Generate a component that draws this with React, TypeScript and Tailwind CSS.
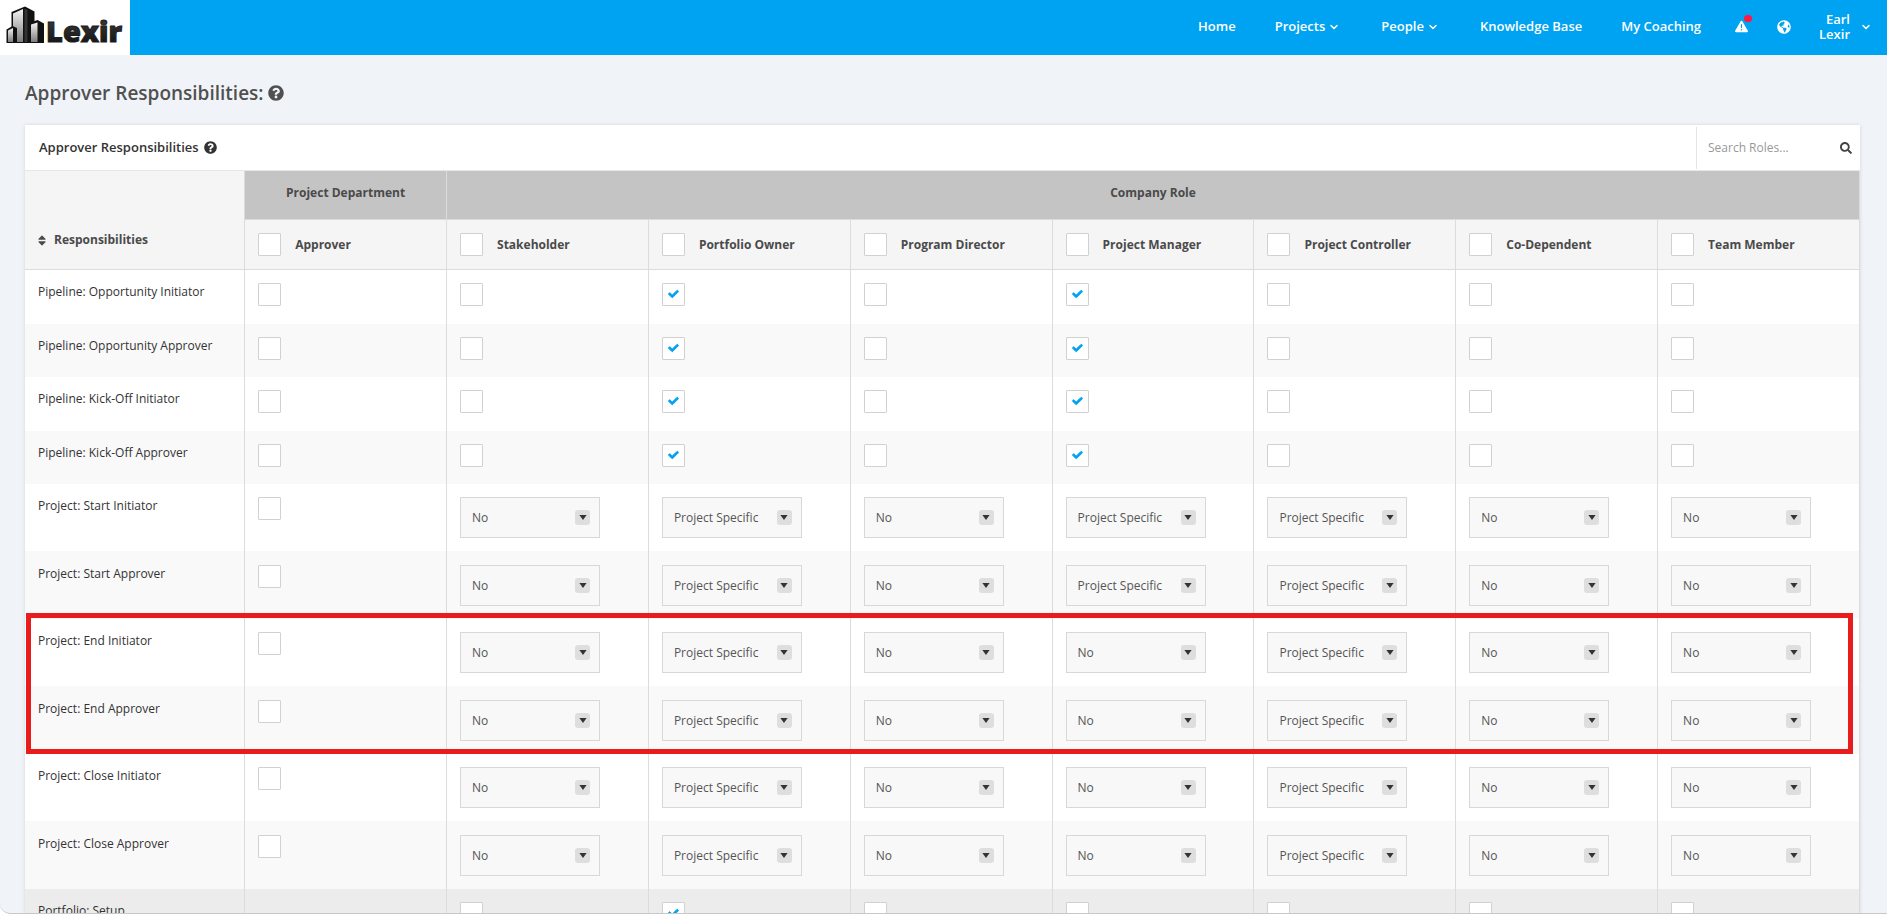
import React, { useState } from 'react';
import { FaCheck, FaGlobeAmericas, FaQuestionCircle, FaSearch, FaSort } from 'react-icons/fa';
import { FaTriangleExclamation } from 'react-icons/fa6';
import { FiChevronDown } from 'react-icons/fi';

const ROLES = [
  'Stakeholder',
  'Portfolio Owner',
  'Program Director',
  'Project Manager',
  'Project Controller',
  'Co-Dependent',
  'Team Member',
];

type Row =
  | { name: string; kind: 'check'; checked: number[] }
  | { name: string; kind: 'select'; specific: number[] };

const ROWS: Row[] = [
  { name: 'Pipeline: Opportunity Initiator', kind: 'check', checked: [1, 3] },
  { name: 'Pipeline: Opportunity Approver', kind: 'check', checked: [1, 3] },
  { name: 'Pipeline: Kick-Off Initiator', kind: 'check', checked: [1, 3] },
  { name: 'Pipeline: Kick-Off Approver', kind: 'check', checked: [1, 3] },
  { name: 'Project: Start Initiator', kind: 'select', specific: [1, 3, 4] },
  { name: 'Project: Start Approver', kind: 'select', specific: [1, 3, 4] },
  { name: 'Project: End Initiator', kind: 'select', specific: [1, 4] },
  { name: 'Project: End Approver', kind: 'select', specific: [1, 4] },
  { name: 'Project: Close Initiator', kind: 'select', specific: [1, 4] },
  { name: 'Project: Close Approver', kind: 'select', specific: [1, 4] },
  { name: 'Portfolio: Setup', kind: 'check', checked: [1] },
];

const Checkbox = ({ label, initial = false }: { label: string; initial?: boolean }) => {
  const [checked, setChecked] = useState(initial);

  return (
    <label className="relative block h-[23px] w-[23px] shrink-0 cursor-pointer">
      <input
        type="checkbox"
        aria-label={label}
        checked={checked}
        onChange={() => setChecked(!checked)}
        className="block h-[23px] w-[23px] appearance-none rounded-[1px] border border-[#d1d1d1] bg-white"
      />
      {checked && (
        <FaCheck className="pointer-events-none absolute inset-x-0 top-[6px] mx-auto h-[10px] w-[11px] stroke-[#00a2f2] stroke-[50] text-[#00a2f2]" />
      )}
    </label>
  );
};

const RoleSelect = ({ label, initial }: { label: string; initial: string }) => (
  <div className="relative w-[140px]">
    <select
      aria-label={label}
      defaultValue={initial}
      className="block h-[41px] w-full appearance-none border border-[#d8d8d8] bg-[#f8f8f8] pl-[11px] pr-8 text-[12px] text-[#555]"
    >
      <option>No</option>
      <option>Project Specific</option>
    </select>
    <span className="pointer-events-none absolute top-[13px] right-[10px] flex h-[15px] w-[15px] items-center justify-center rounded-[3px] bg-[#dedede]">
      <svg viewBox="0 0 8 5" className="h-[5px] w-2" fill="#333">
        <path d="M0.4 0h7.2L4 5z" />
      </svg>
    </span>
  </div>
);

const Logo = () => (
  <a href="#" aria-label="Lexir" className="block h-[55px] w-[130px] bg-white">
    <svg viewBox="0 0 130 55" className="h-full w-full">
      <defs>
        <linearGradient id="face" x1="0" y1="0" x2="0" y2="1">
          <stop offset="0" stopColor="#f4f4f4" />
          <stop offset="1" stopColor="#7c7c7c" />
        </linearGradient>
        <linearGradient id="word" x1="0" y1="0" x2="0" y2="1">
          <stop offset="0" stopColor="#444" />
          <stop offset="1" stopColor="#0c0c0c" />
        </linearGradient>
      </defs>
      <path d="M11.500 12L25 6.500L34.500 11.500V43H11.500z" fill="#111" />
      <path d="M13 13.500L23 9V42H13z" fill="url(#face)" />
      <path d="M24.500 8.500L27.500 10V42H24.500z" fill="#333" />
      <path d="M6.500 29.500L12.500 26L17 28V43H6.500z" fill="#111" />
      <path d="M8 30.500L13 28V42H8z" fill="url(#face)" />
      <path d="M29 23L37.500 20L44 23.500V43H29z" fill="#111" />
      <path d="M31 24.500L37.500 22.500V42H31z" fill="url(#face)" />
      <text
        x="46"
        y="42"
        fontFamily="'Open Sans', sans-serif"
        fontSize="29"
        fontWeight="800"
        fill="url(#word)"
        stroke="#1c1c1c"
        strokeWidth="1"
      >
        Lexir
      </text>
    </svg>
  </a>
);

const Header = () => (
  <header className="flex h-[55px] items-center justify-between bg-[#00a2f2] text-[13px] font-semibold text-white">
    <Logo />
    <nav className="flex items-center pr-[15px] pb-[2px]">
      <a href="#" className="mr-[39px]">Home</a>
      <button type="button" className="mr-[41px] flex items-center gap-[3px]">
        Projects <FiChevronDown className="h-3 w-3 stroke-[3]" />
      </button>
      <button type="button" className="mr-[41px] flex items-center gap-[3px]">
        People <FiChevronDown className="h-3 w-3 stroke-[3]" />
      </button>
      <a href="#" className="mr-[39px]">Knowledge Base</a>
      <a href="#" className="mr-[34px]">My Coaching</a>
      <button type="button" aria-label="Alerts" className="relative mr-[29px]">
        <FaTriangleExclamation className="h-[13px] w-[13px]" />
        <span className="absolute -top-[5px] -right-1 h-[7px] w-2 rounded-full bg-[#ff1744]" />
      </button>
      <button type="button" aria-label="Language" className="mr-[28px]">
        <FaGlobeAmericas className="h-[14px] w-[14px]" />
      </button>
      <button type="button" className="flex items-center gap-[10px] text-right leading-[15px]">
        <span>Earl<br />Lexir</span>
        <FiChevronDown className="h-3 w-3 stroke-[3]" />
      </button>
    </nav>
  </header>
);

const rowStyle = (row: Row, index: number) => {
  if (row.name === 'Portfolio: Setup') return 'h-[54px] bg-[#ececec]';
  if (row.kind === 'check') return index % 2 ? 'h-[53px] bg-[#f9f9f9]' : 'h-[54px] bg-white';
  return index % 2 ? 'h-[68px] bg-[#f9f9f9]' : 'h-[67px] bg-white';
};

const ResponsibilityRow = ({ row, index }: { row: Row; index: number }) => {
  const pad = row.kind === 'select' && index % 2 ? 'pt-[14px]' : 'pt-[13px]';

  return (
    <tr className={`align-top ${rowStyle(row, index)}`}>
      <th scope="row" className={`border-r border-[#dcdcdc] pl-[13px] text-left leading-[18px] font-normal text-[#333] ${pad}`}>
        {row.name}
      </th>
      <td className={`border-r border-[#dcdcdc] pl-[13px] ${pad}`}>
        {row.name !== 'Portfolio: Setup' && <Checkbox label={`${row.name}, Approver`} />}
      </td>
      {ROLES.map((role, i) => (
        <td key={role} className={`border-r border-[#dcdcdc] pl-[13px] ${pad}`}>
          {row.kind === 'check' ? (
            <Checkbox label={`${row.name}, ${role}`} initial={row.checked.includes(i)} />
          ) : (
            <RoleSelect
              label={`${row.name}, ${role}`}
              initial={row.specific.includes(i) ? 'Project Specific' : 'No'}
            />
          )}
        </td>
      ))}
    </tr>
  );
};

const App: React.FC = () => {
  return (
    <div className="h-screen bg-white font-['Open_Sans',sans-serif]">
      <div className="h-[calc(100vh-1px)] overflow-hidden rounded-bl-[10px] border-b border-[#c8c8c8] bg-[#f0f4f8]">
        <Header />

        <main className="pt-[22px] pr-[27px] pl-[25px]">
          <h1 className="flex items-center gap-1 text-[19px] leading-8 font-semibold text-[#505050]">
            Approver Responsibilities:
            <FaQuestionCircle className="h-4 w-4" />
          </h1>

          <section className="relative mt-4 bg-white shadow-[0_0_4px_rgba(0,0,0,0.12)]">
            {/* Title bar */}
            <div className="flex h-[46px] items-center justify-between border-b border-[#e7e7e7] pl-[14px]">
              <h2 className="flex items-center gap-[5px] text-[13px] font-semibold text-[#333]">
                Approver Responsibilities
                <FaQuestionCircle className="h-[13px] w-[13px]" />
              </h2>
              <div className="flex h-[42px] w-[164px] items-center border-l border-[#e4e4e4] pr-2 pl-[11px]">
                <input
                  type="text"
                  aria-label="Search Roles"
                  placeholder="Search Roles..."
                  className="min-w-0 flex-1 text-[12px] placeholder:text-[#999]"
                />
                <button type="button" aria-label="Search" className="text-[#444]">
                  <FaSearch className="h-3 w-3" />
                </button>
              </div>
            </div>

            <table className="w-full table-fixed border-separate border-spacing-0 text-[12px]">
              <colgroup>
                <col className="w-[12%]" />
                <col span={8} className="w-[11%]" />
              </colgroup>
              <thead className="text-[#4a4a4a]">
                <tr className="h-[49px] bg-[#c4c4c4]">
                  <th rowSpan={2} className="border-r border-b border-[#dcdcdc] bg-[#f5f5f5] pt-10 pl-[13px] text-left font-bold">
                    <button type="button" className="flex items-center gap-[8px]">
                      <FaSort className="h-[13px] w-[8px]" />
                      Responsibilities
                    </button>
                  </th>
                  <th className="border-r border-b border-[#dcdcdc] pb-1 font-bold">Project Department</th>
                  <th colSpan={7} className="border-r border-b border-[#dcdcdc] pb-1 font-bold">Company Role</th>
                </tr>
                <tr className="h-[50px] bg-[#f5f5f5]">
                  {['Approver', ...ROLES].map((role) => (
                    <th key={role} className="border-r border-b border-[#dcdcdc] pl-[13px] font-bold">
                      <div className="flex items-center gap-[14px]">
                        <Checkbox label={`All ${role}`} />
                        {role}
                      </div>
                    </th>
                  ))}
                </tr>
              </thead>
              <tbody>
                {ROWS.map((row, i) => (
                  <ResponsibilityRow key={row.name} row={row} index={i} />
                ))}
              </tbody>
            </table>

            {/* Highlight around the project end rows */}
            <div className="pointer-events-none absolute top-[488px] right-[7px] left-px h-[141px] border-[5px] border-[#e81c1c]" />
          </section>
        </main>
      </div>
    </div>
  );
};

export default App;
